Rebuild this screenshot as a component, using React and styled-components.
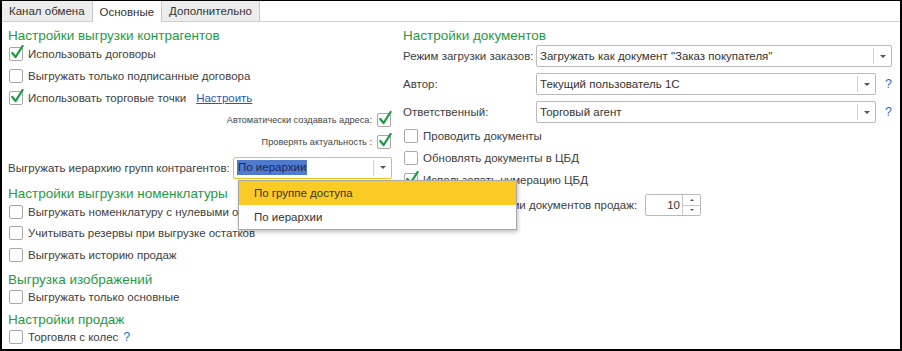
import React from "react";
import styled, { createGlobalStyle } from "styled-components";

const Global = createGlobalStyle`
  html, body { margin: 0; padding: 0; background: #fff; }
  body { font-family: "Liberation Sans", Arial, sans-serif; }
  * { box-sizing: border-box; }
`;

const Frame = styled.div`
  width: 902px;
  height: 351px;
  border: 2px solid #000;
  border-top-width: 1px;
  background: #fff;
  color: #404040;
  font-size: 11.5px;
  overflow: hidden;
  position: relative;
`;

const TabBar = styled.div`
  display: flex;
  height: 21px;
  border-bottom: 1px solid #cfcfcf;
`;

const Tab = styled.div`
  height: ${(p) => (p.$active ? "21px" : "20px")};
  padding: 0 7px;
  display: flex;
  align-items: center;
  font-size: 11.5px;
  color: #333;
  background: ${(p) => (p.$active ? "#fff" : "#ededed")};
  border: 1px solid #c8c8c8;
  border-top: none;
  border-bottom: none;
  margin-left: -1px;
  &:first-child { margin-left: 0; border-left: none; }
`;

const Content = styled.div`
  display: flex;
  gap: 9px;
  padding: 5px 8px 0 4px;
`;

const LeftCol = styled.div`
  width: 386px;
  display: flex;
  flex-direction: column;
`;

const RightCol = styled.div`
  width: 491px;
  display: flex;
  flex-direction: column;
`;

const Header = styled.div`
  color: #1f9a45;
  font-size: 13.5px;
  height: 17px;
  line-height: 17px;
  margin-top: ${(p) => p.$mt || 0}px;
  padding-left: 2px;
  white-space: nowrap;
`;

const Row = styled.div`
  display: flex;
  align-items: center;
  height: ${(p) => p.$h || 22}px;
  margin-top: ${(p) => p.$mt || 0}px;
  justify-content: ${(p) => (p.$right ? "flex-end" : "flex-start")};
  white-space: nowrap;
  position: relative;
`;

const BoxWrap = styled.span`
  position: relative;
  width: 14px;
  height: 14px;
  margin-left: 3px;
  margin-right: ${(p) => (p.$last ? 1 : 5)}px;
  flex: none;
`;

const Box = styled.span`
  position: absolute;
  inset: 0;
  border: 1px solid #a9a9a9;
  border-radius: 2px;
  background: #fff;
`;

const Tick = styled.svg`
  position: absolute;
  left: 1px;
  top: -3px;
  width: 14px;
  height: 16px;
  overflow: visible;
`;

const Check = ({ checked, last }) => (
  <BoxWrap $last={last}>
    <Box />
    {checked && (
      <Tick viewBox="0 0 14 16">
        <path d="M2.3 9 L5.6 13 L12.6 2" fill="none" stroke="#1e9a45" strokeWidth="2.3" strokeLinecap="round" strokeLinejoin="round" />
      </Tick>
    )}
  </BoxWrap>
);

const Label = styled.span`
  color: #404040;
`;

const Link = styled.a`
  color: #2956b6;
  text-decoration: underline;
  margin-left: 10px;
  cursor: pointer;
`;

const Help = styled.span`
  color: #1e73be;
  font-size: 12.5px;
  margin-left: ${(p) => p.$ml || 6}px;
`;

const SmallLabel = styled.span`
  font-size: 9.2px;
  color: #444;
  margin-right: 2px;
`;

const FieldLabel = styled.span`
  width: ${(p) => p.$w || 135}px;
  padding-left: 2px;
  flex: none;
`;

const Combo = styled.div`
  position: relative;
  display: flex;
  align-items: stretch;
  width: ${(p) => p.$w}px;
  height: 22px;
  border: 1px solid ${(p) => (p.$focus ? "#f0c21e" : "#b9b9b9")};
  border-radius: 2px;
  background: #fff;
  flex: none;
`;

const ComboText = styled.div`
  flex: 1;
  display: flex;
  align-items: center;
  padding-left: 3px;
  overflow: hidden;
  color: #333;
`;

const Selected = styled.span`
  background: #4f7bcf;
  color: #16275e;
  line-height: 15px;
  padding: 0 1px;
`;

const ComboBtn = styled.div`
  width: 17px;
  display: flex;
  align-items: center;
  justify-content: center;
  &::before {
    content: "";
    position: absolute;
    right: 17px;
    top: 2px;
    bottom: 2px;
    border-left: 1px solid #d0d0d0;
  }
`;

const Arrow = styled.span`
  width: 0;
  height: 0;
  border-left: 3px solid transparent;
  border-right: 3px solid transparent;
  border-top: 3px solid #555;
`;

const DropList = styled.div`
  position: absolute;
  left: 4px;
  top: 22px;
  width: 279px;
  background: #fff;
  border: 1px solid #a8a8a8;
  box-shadow: 1px 2px 4px rgba(0, 0, 0, 0.25);
  z-index: 5;
`;

const DropItem = styled.div`
  height: 24px;
  display: flex;
  align-items: center;
  padding-left: 15px;
  background: ${(p) => (p.$hot ? "#fbcb25" : "#fff")};
  color: #333;
`;

const NumLabel = styled.span`
  width: 244px;
  padding-left: 2px;
  flex: none;
  overflow: hidden;
`;

const Num = styled.div`
  display: flex;
  width: 56px;
  height: 22px;
  border: 1px solid #b9b9b9;
  border-radius: 2px;
`;

const NumVal = styled.div`
  flex: 1;
  display: flex;
  align-items: center;
  justify-content: flex-end;
  padding-right: 2px;
  color: #333;
`;

const Spin = styled.div`
  width: 18px;
  border-left: 1px solid #c8c8c8;
  display: flex;
  flex-direction: column;
`;

const SpinHalf = styled.div`
  flex: 1;
  display: flex;
  align-items: center;
  justify-content: center;
  border-top: ${(p) => (p.$bottom ? "1px solid #c8c8c8" : "none")};
  &::after {
    content: "";
    width: 0;
    height: 0;
    border-left: 2px solid transparent;
    border-right: 2px solid transparent;
    ${(p) => (p.$bottom ? "border-top: 2px solid #555;" : "border-bottom: 2px solid #555;")}
  }
`;

const ComboField = ({ w, text, focus, open }) => (
  <Combo $w={w} $focus={focus}>
    <ComboText>{focus ? <Selected>{text}</Selected> : text}</ComboText>
    <ComboBtn>
      <Arrow />
    </ComboBtn>
    {open && (
      <DropList>
        <DropItem $hot>По группе доступа</DropItem>
        <DropItem>По иерархии</DropItem>
      </DropList>
    )}
  </Combo>
);

export default function App() {
  return (
    <>
      <Global />
      <Frame>
        <TabBar>
          <Tab>Канал обмена</Tab>
          <Tab $active>Основные</Tab>
          <Tab>Дополнительно</Tab>
        </TabBar>
        <Content>
          <LeftCol>
            <Header>Настройки выгрузки контрагентов</Header>
            <Row $h={20}>
              <Check checked />
              <Label>Использовать договоры</Label>
            </Row>
            <Row $h={23}>
              <Check />
              <Label>Выгружать только подписанные договора</Label>
            </Row>
            <Row>
              <Check checked />
              <Label>Использовать торговые точки</Label>
              <Link>Настроить</Link>
            </Row>
            <Row $right>
              <SmallLabel>Автоматически создавать адреса:</SmallLabel>
              <Check checked last />
            </Row>
            <Row $right>
              <SmallLabel>Проверять актуальность :</SmallLabel>
              <Check checked last />
            </Row>
            <Row $mt={3} $h={23}>
              <FieldLabel $w={227}>Выгружать иерархию групп контрагентов:</FieldLabel>
              <ComboField w={159} text="По иерархии" focus open />
            </Row>
            <Header $mt={6}>Настройки выгрузки номенклатуры</Header>
            <Row $h={19}>
              <Check />
              <Label>Выгружать номенклатуру с нулевыми остатками</Label>
            </Row>
            <Row $h={23}>
              <Check />
              <Label>Учитывать резервы при выгрузке остатков</Label>
            </Row>
            <Row>
              <Check />
              <Label>Выгружать историю продаж</Label>
            </Row>
            <Header $mt={5}>Выгрузка изображений</Header>
            <Row $h={18}>
              <Check />
              <Label>Выгружать только основные</Label>
            </Row>
            <Header $mt={5}>Настройки продаж</Header>
            <Row $h={18}>
              <Check />
              <Label>Торговля с колес</Label>
              <Help $ml={5}>?</Help>
            </Row>
          </LeftCol>
          <RightCol>
            <Header>Настройки документов</Header>
            <Row $mt={1}>
              <FieldLabel>Режим загрузки заказов:</FieldLabel>
              <ComboField w={356} text='Загружать как документ "Заказ покупателя"' />
            </Row>
            <Row $mt={6}>
              <FieldLabel>Автор:</FieldLabel>
              <ComboField w={340} text="Текущий пользователь 1С" />
              <Help $ml={9}>?</Help>
            </Row>
            <Row $mt={6}>
              <FieldLabel>Ответственный:</FieldLabel>
              <ComboField w={340} text="Торговый агент" />
              <Help $ml={9}>?</Help>
            </Row>
            <Row $mt={2}>
              <Check />
              <Label>Проводить документы</Label>
            </Row>
            <Row>
              <Check />
              <Label>Обновлять документы в ЦБД</Label>
            </Row>
            <Row>
              <Check checked />
              <Label>Использовать нумерацию ЦБД</Label>
            </Row>
            <Row $mt={3}>
              <NumLabel>Срок выгрузки истории документов продаж:</NumLabel>
              <Num>
                <NumVal>10</NumVal>
                <Spin>
                  <SpinHalf />
                  <SpinHalf $bottom />
                </Spin>
              </Num>
            </Row>
          </RightCol>
        </Content>
      </Frame>
    </>
  );
}
